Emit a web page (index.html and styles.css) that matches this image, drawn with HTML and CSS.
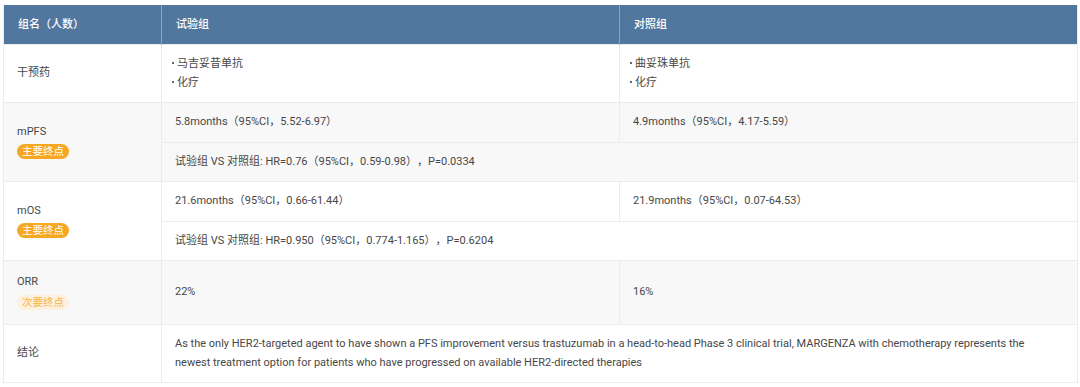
FILE: index.html
```html
<!DOCTYPE html>
<html lang="zh">
<head>
<meta charset="utf-8">
<link rel="stylesheet" href="styles.css">
</head>
<body>
<table class="trial">
  <colgroup>
    <col class="c-name">
    <col class="c-arm">
    <col class="c-arm2">
  </colgroup>
  <thead>
    <tr>
      <th>组名（人数）</th>
      <th>试验组</th>
      <th>对照组</th>
    </tr>
  </thead>
  <tbody>
    <tr>
      <td class="label">干预药</td>
      <td><ul class="drugs"><li>马吉妥昔单抗</li><li>化疗</li></ul></td>
      <td><ul class="drugs"><li>曲妥珠单抗</li><li>化疗</li></ul></td>
    </tr>
    <tr class="alt">
      <td class="label" rowspan="2"><div>mPFS</div><span class="badge primary">主要终点</span></td>
      <td>5.8months（95%CI，5.52-6.97）</td>
      <td>4.9months（95%CI，4.17-5.59）</td>
    </tr>
    <tr class="alt">
      <td colspan="2">试验组 VS 对照组: HR=0.76（95%CI，0.59-0.98），P=0.0334</td>
    </tr>
    <tr>
      <td class="label" rowspan="2"><div>mOS</div><span class="badge primary">主要终点</span></td>
      <td>21.6months（95%CI，0.66-61.44）</td>
      <td>21.9months（95%CI，0.07-64.53）</td>
    </tr>
    <tr>
      <td colspan="2">试验组 VS 对照组: HR=0.950（95%CI，0.774-1.165），P=0.6204</td>
    </tr>
    <tr class="alt">
      <td class="label tall"><div>ORR</div><span class="badge secondary">次要终点</span></td>
      <td>22%</td>
      <td>16%</td>
    </tr>
    <tr>
      <td class="label">结论</td>
      <td colspan="2" class="para">As the only HER2-targeted agent to have shown a PFS improvement versus trastuzumab in a head-to-head Phase 3 clinical trial, MARGENZA with chemotherapy represents the newest treatment option for patients who have progressed on available HER2-directed therapies</td>
    </tr>
  </tbody>
</table>
</body>
</html>
```

FILE: styles.css
```css
html, body {
  margin: 0;
  background: #ffffff;
}
body {
  padding: 5px 3px 0 3px;
  font-family: Roboto, "Noto Sans CJK SC", sans-serif;
  font-size: 11px;
  color: #474747;
  text-spacing-trim: space-all;
}
.trial {
  width: 1074px;
  border-collapse: collapse;
  table-layout: fixed;
  border-left: 1px solid #ececec;
  border-right: 1px solid #ececec;
}
.c-name { width: 158px; }
.c-arm { width: 458px; }
.c-arm2 { width: 458px; }
.trial th {
  background: #52779f;
  color: #ffffff;
  font-weight: 500;
  text-align: left;
  padding: 10px 14px;
  line-height: 19px;
  border-left: 1px solid #8ea6c2;
}
.trial th:first-child { border-left: none; }
.trial td {
  padding: 10px 16px 10px 13px;
  line-height: 18.5px;
  border: 1px solid #ececec;
  vertical-align: middle;
}
.trial tr.alt td { background: #f8f8f8; }
.drugs {
  list-style: none;
  margin: 0 0 0 -3px;
  padding: 0;
}
.drugs li::before {
  content: "";
  display: inline-block;
  width: 2px;
  height: 2px;
  background: #666;
  margin-right: 3px;
  vertical-align: 3px;
}
.drugs li { line-height: 18.5px; }
.badge {
  display: inline-block;
  margin-top: 3px;
  padding: 0 5px;
  height: 15px;
  line-height: 15px;
  border-radius: 8px;
  font-size: 10.5px;
}
.badge.primary {
  background: #f6a823;
  color: #ffffff;
}
.badge.secondary {
  background: #fdf0dc;
  color: #f6b444;
}
.trial td.tall {
  padding-top: 12px;
  padding-bottom: 12px;
}
.trial td.para { line-height: 18.5px; }
```
